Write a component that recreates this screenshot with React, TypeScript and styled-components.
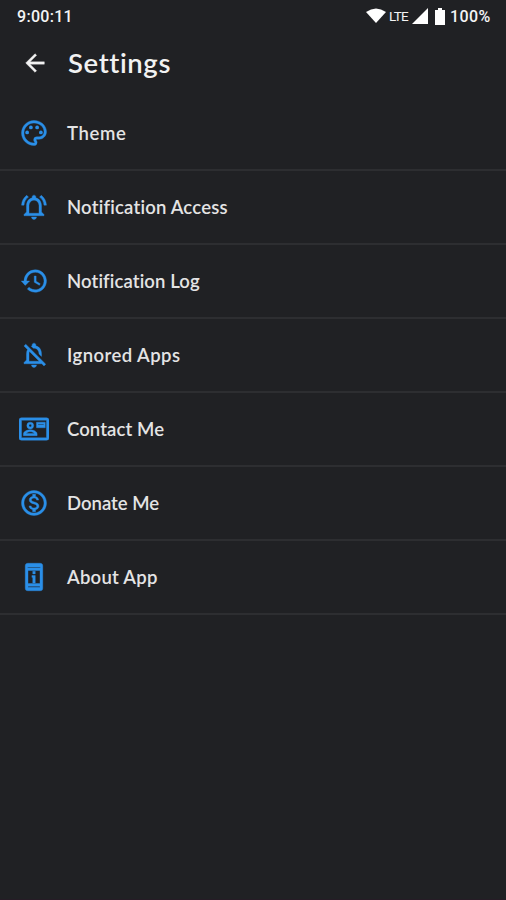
import React from "react";
import styled, { createGlobalStyle } from "styled-components";
import {
  MdArrowBack,
  MdOutlineMonetizationOn,
  MdOutlineNotificationsActive,
  MdOutlineNotificationsOff,
  MdOutlinePalette,
} from "react-icons/md";

const GlobalStyle = createGlobalStyle`
  * { box-sizing: border-box; }
  body { margin: 0; background: #202124; }
`;

const Screen = styled.main`
  width: 100%;
  height: 900px;
  display: flex;
  flex-direction: column;
  overflow: hidden;
  background: #202124;
  border-bottom: 1px solid #261c26;
  font-family: Lato, sans-serif;
`;

const StatusBar = styled.div`
  height: 32px;
  flex: none;
  display: flex;
  align-items: center;
  padding: 0 14px 0 17px;
  color: #f4f4f4;
  font: 500 16px/32px Roboto, sans-serif;
`;

const Clock = styled.span`
  margin-right: auto;
  padding-top: 1px;
  letter-spacing: 0.3px;
`;

const StatusIcon = styled.svg<{ $gap: number }>`
  flex: none;
  margin-right: ${(p) => p.$gap}px;
  fill: #fff;
`;

const Network = styled.span`
  width: 21px;
  margin-right: 2px;
  font-size: 13.5px;
  font-weight: 400;
  letter-spacing: -0.7px;
`;

const Battery = styled.span`
  width: 42px;
  padding-top: 1px;
  letter-spacing: 0.4px;
`;

const Header = styled.header`
  height: 65px;
  flex: none;
  display: flex;
  align-items: center;
  padding: 0 0 4px 21px;
  color: #f2f2f2;
`;

const BackButton = styled.button`
  display: flex;
  width: 47px;
  padding: 0;
  border: 0;
  background: none;
  color: inherit;

  path:not([fill="none"]) {
    stroke: currentColor;
    stroke-width: 0.3px;
  }
  path[fill="none"] {
    stroke: none;
  }
`;

const Title = styled.h1`
  margin: 0;
  font-size: 27.5px;
  line-height: 34px;
  font-weight: 600;
  letter-spacing: 0.6px;
`;

const List = styled.nav`
  display: flex;
  flex-direction: column;
`;

const Row = styled.a`
  height: 74px;
  display: flex;
  align-items: center;
  padding-left: 19px;
  border-bottom: 2px solid #2d2e31;
  color: #e4e4e4;
`;

const IconSlot = styled.span`
  width: 48px;
  display: flex;
  color: #2a8fe8;

  svg {
    width: 30px;
    height: 30px;
  }
  path:not([fill="none"]) {
    stroke: currentColor;
    stroke-width: 0.3px;
  }
  path[fill="none"] {
    stroke: none;
  }
`;

const Label = styled.span<{ $spacing: number }>`
  font-size: 18.5px;
  line-height: 24px;
  font-weight: 600;
  letter-spacing: ${(p) => p.$spacing}px;
`;

const HistoryIcon = () => (
  <svg viewBox="0 0 24 24" fill="currentColor">
    <path d="M13 3a9 9 0 0 0-9 9H1.800l3.200 3.500L8.500 12H6a7 7 0 1 1 2.050 4.950l-1.420 1.420A9 9 0 1 0 13 3Z" />
    <path d="M12.200 8v5l4.100 2.400.7-1.200-3.300-2V8Z" />
  </svg>
);

const ContactIcon = () => (
  <svg viewBox="0 0 24 24" fill="currentColor">
    <path
      fillRule="evenodd"
      d="M2 3h20a2 2 0 0 1 2 2v14a2 2 0 0 1-2 2H2a2 2 0 0 1-2-2V5a2 2 0 0 1 2-2Zm0 2v14h20V5ZM9 6.500a2.750 2.750 0 1 1 0 5.500 2.750 2.750 0 0 1 0-5.500Zm0 1.700a1.050 1.050 0 1 0 0 2.100 1.050 1.050 0 0 0 0-2.100ZM9 12.600c2 0 5.500 1.100 5.500 3.400v1.300h-11V16c0-2.300 3.500-3.400 5.500-3.400Zm0 1.600c-1.200 0-2.700.5-3.300 1.400h6.600c-.6-.9-2.100-1.400-3.300-1.400Z"
    />
    <path fillRule="evenodd" d="M14 6.500h7V11h-7Zm1.200 1.600v.6h4.600v-.6Z" />
  </svg>
);

const DeviceInfoIcon = () => (
  <svg viewBox="0 0 24 24" fill="currentColor">
    <path
      fillRule="evenodd"
      d="M7 1h10a2 2 0 0 1 2 2v18a2 2 0 0 1-2 2H7a2 2 0 0 1-2-2V3a2 2 0 0 1 2-2Zm0 2.900v.7h10v-.7ZM7.200 6.800v10.400h9.600V6.800Zm0 12.600v.7h9.600v-.7Z"
    />
    <path d="M11 7.300h2v2.200h-2ZM10.300 10.800H13v6h-2v-4.500h-.7Z" />
  </svg>
);

const items: { label: string; icon: React.ElementType; spacing: number }[] = [
  { label: "Theme", icon: MdOutlinePalette, spacing: 0.65 },
  { label: "Notification Access", icon: MdOutlineNotificationsActive, spacing: 0.2 },
  { label: "Notification Log", icon: HistoryIcon, spacing: 0.12 },
  { label: "Ignored Apps", icon: MdOutlineNotificationsOff, spacing: 0.45 },
  { label: "Contact Me", icon: ContactIcon, spacing: 0.1 },
  { label: "Donate Me", icon: MdOutlineMonetizationOn, spacing: 0 },
  { label: "About App", icon: DeviceInfoIcon, spacing: 0.25 },
];

export default function App() {
  return (
    <>
      <GlobalStyle />
      <Screen>
        <StatusBar>
          <Clock>9:00:11</Clock>
          <StatusIcon $gap={3} width="20" height="16" viewBox="0 0 20 16">
            <path d="M0 4Q10-3 20 4L10 15Z" />
          </StatusIcon>
          <Network>LTE</Network>
          <StatusIcon $gap={7} width="16" height="16" viewBox="0 0 16 16">
            <path d="M16 0V16H0Z" />
          </StatusIcon>
          <StatusIcon $gap={5} width="10" height="17" viewBox="0 0 10 17">
            <path d="M3 0h4v2h3v15H0V2h3Z" />
          </StatusIcon>
          <Battery>100%</Battery>
        </StatusBar>
        <Header>
          <BackButton aria-label="Back">
            <MdArrowBack size={28} />
          </BackButton>
          <Title>Settings</Title>
        </Header>
        <List>
          {items.map(({ label, icon: Icon, spacing }) => (
            <Row key={label}>
              <IconSlot>
                <Icon />
              </IconSlot>
              <Label $spacing={spacing}>{label}</Label>
            </Row>
          ))}
        </List>
      </Screen>
    </>
  );
}
